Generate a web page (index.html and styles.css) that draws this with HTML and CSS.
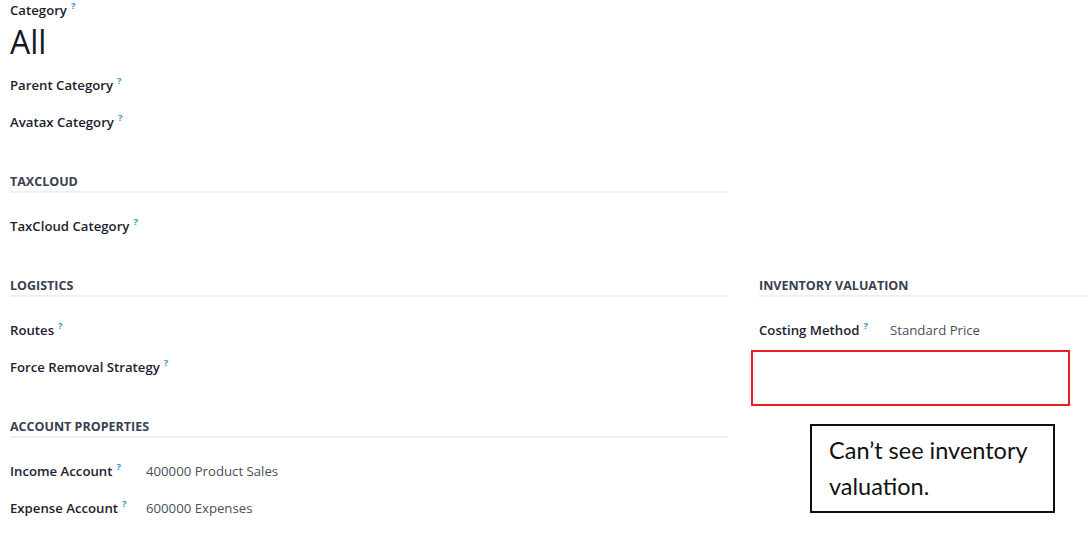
FILE: index.html
```html
<!DOCTYPE html>
<html lang="en">
<head>
  <meta charset="UTF-8" />
  <meta name="viewport" content="width=device-width, initial-scale=1.0" />
  <title>Product Category</title>
  <link rel="stylesheet" href="styles.css">
</head>
<body>
  <div class="sheet">
    <div class="col-left">
      <div class="title">
        <div class="label">Category<sup class="help">?</sup></div>
        <h1 class="name">All</h1>
      </div>
      <div class="fields">
        <div class="field"><span class="label">Parent Category<sup class="help">?</sup></span></div>
        <div class="field"><span class="label">Avatax Category<sup class="help">?</sup></span></div>
      </div>

      <h2 class="group-title">TaxCloud</h2>
      <div class="fields">
        <div class="field"><span class="label">TaxCloud Category<sup class="help">?</sup></span></div>
      </div>
    </div>

    <div class="col-left">
      <h2 class="group-title">Logistics</h2>
      <div class="fields">
        <div class="field"><span class="label">Routes<sup class="help">?</sup></span></div>
        <div class="field"><span class="label">Force Removal Strategy<sup class="help">?</sup></span></div>
      </div>

      <h2 class="group-title">Account Properties</h2>
      <div class="fields">
        <div class="field"><span class="label wide">Income Account<sup class="help">?</sup></span><span class="value">400000 Product Sales</span></div>
        <div class="field"><span class="label wide">Expense Account<sup class="help">?</sup></span><span class="value">600000 Expenses</span></div>
      </div>
    </div>

    <div class="col-right">
      <h2 class="group-title">Inventory Valuation</h2>
      <div class="fields">
        <div class="field"><span class="label narrow">Costing Method<sup class="help">?</sup></span><span class="value">Standard Price</span></div>
      </div>
      <div class="highlight">
        <div class="note">Can’t see inventory valuation.</div>
      </div>
    </div>
  </div>
</body>
</html>
```

FILE: styles.css
```css
html, body {
  margin: 0;
  background: #fff;
  overflow: hidden;
}

body {
  font-family: 'Open Sans', 'Noto Sans', sans-serif;
  font-size: 13.2px;
  color: #1d2230;
}

.sheet {
  display: grid;
  grid-template-columns: 717px 717px;
  grid-template-rows: auto auto;
  column-gap: 32px;
  padding-left: 10px;
}

.sheet > .col-left:first-child {
  grid-column: 1;
  grid-row: 1;
}

.sheet > .col-left:nth-child(2) {
  grid-column: 1;
  grid-row: 2;
}

.col-right {
  grid-column: 2;
  grid-row: 2;
}

.title .label {
  display: block;
  height: 20px;
  line-height: 20px;
}

.name {
  margin: 0;
  font-size: 32px;
  font-weight: 400;
  line-height: 44px;
  color: #111827;
}

.fields {
  margin-top: 2px;
}

.field {
  display: flex;
  align-items: center;
  height: 37px;
}

.label {
  font-weight: 600;
  color: #1d2230;
  white-space: nowrap;
}

.label.wide {
  width: 136px;
}

.label.narrow {
  width: 131px;
}

.help {
  font-size: 9.5px;
  font-weight: 700;
  line-height: 0;
  color: #3f93bf;
  margin-left: 4px;
  vertical-align: 6px;
}

.value {
  color: #4a4f5a;
}

.group-title {
  margin: 33px 0 0;
  font-size: 12.5px;
  font-weight: 700;
  text-transform: uppercase;
  line-height: 18px;
  color: #374151;
  border-bottom: 2px solid #eeeeee;
}

.group-title + .fields {
  margin-top: 14px;
}

.highlight {
  position: relative;
  height: 52px;
  width: 315px;
  margin: 2px 0 0 -8px;
  border: 2px solid #ee1c24;
}

.note {
  position: absolute;
  left: 57px;
  top: 72px;
  box-sizing: border-box;
  width: 245px;
  height: 89px;
  padding: 6px 0 0 17px;
  border: 2px solid #111;
  font-family: 'Lato', 'Liberation Sans', sans-serif;
  font-size: 23.5px;
  line-height: 36px;
  color: #111;
}
```
